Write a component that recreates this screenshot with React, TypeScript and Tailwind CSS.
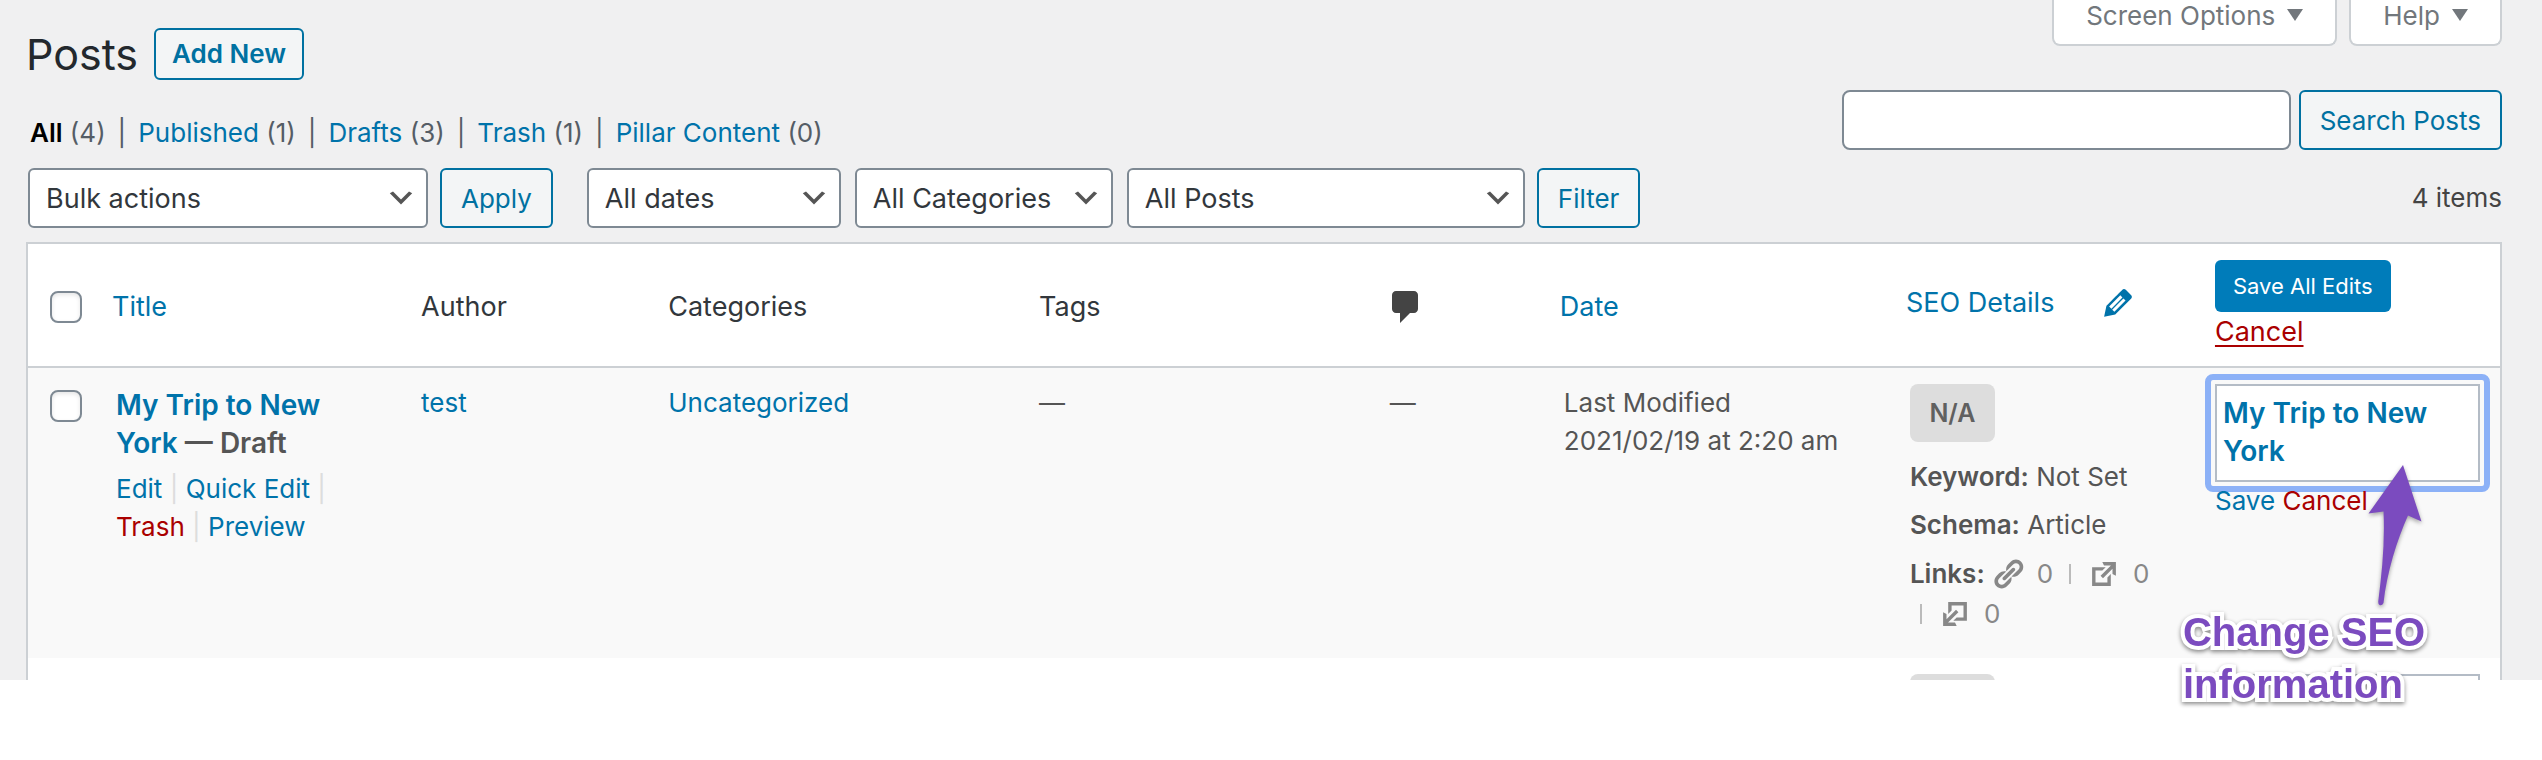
import { useState } from 'react';
import type { ReactNode } from 'react';

const views = [
    { label: 'All', count: 4, current: true },
    { label: 'Published', count: 1 },
    { label: 'Drafts', count: 3 },
    { label: 'Trash', count: 1 },
    { label: 'Pillar Content', count: 0 },
];

const linkClass = 'text-[#0073aa]';
const buttonClass = 'h-[60px] rounded-md border-2 border-[#0071a1] bg-[#f3f5f6] px-[19px] pt-0.5 text-[26px] text-[#0071a1]';
const checkboxClass = 'block size-8 appearance-none rounded-lg border-2 border-[#7e8993] bg-white shadow-[inset_0_2px_4px_rgba(0,0,0,0.1)]';
const headClass = 'pt-[18px] pb-[14px]';

function DashIcon({ path, className }: { path: string; className?: string }) {
    return (
        <svg viewBox="0 0 20 20" fill="currentColor" aria-hidden="true" className={className}>
            <path d={path} />
        </svg>
    );
}

const icons = {
    comment: 'M5 2h9c1.1 0 2 .9 2 2v7c0 1.1-.9 2-2 2h-2l-5 5v-5H5c-1.1 0-2-.9-2-2V4c0-1.1.9-2 2-2z',
    edit: 'M13.89 3.39l2.71 2.72c.46.46.42 1.24.03 1.64l-8.01 8.02-5.56 1.16 1.16-5.58s7.6-7.63 7.99-8.03c.39-.39 1.22-.39 1.68.07zm-2.73 2.79l-5.59 5.61 1.11 1.11 5.54-5.65zm-2.97 8.23l5.58-5.6-1.07-1.08-5.59 5.6z',
    link: 'M17.74 2.76c1.68 1.69 1.68 4.41 0 6.1l-1.53 1.52c-1.12 1.12-2.7 1.47-4.14 1.09l2.62-2.61.76-.77.76-.76c.84-.84.84-2.2 0-3.04-.84-.85-2.2-.85-3.04 0l-.77.76-3.38 3.38c-.37-1.44-.02-3.02 1.1-4.14l1.52-1.53c1.69-1.68 4.42-1.68 6.1 0zM8.59 13.43l5.34-5.34c.42-.42.42-1.1 0-1.52-.44-.43-1.13-.39-1.53 0l-5.33 5.34c-.42.42-.42 1.1 0 1.52.44.43 1.13.39 1.52 0zm-.76 2.29l4.14-4.15c.38 1.44.03 3.02-1.09 4.14l-1.52 1.53c-1.69 1.68-4.41 1.68-6.1 0-1.68-1.68-1.68-4.42 0-6.1l1.53-1.52c1.12-1.12 2.7-1.47 4.14-1.1l-4.14 4.15c-.85.84-.85 2.2 0 3.05.84.84 2.2.84 3.04 0z',
    external: 'M9 3h8v8l-2-1V6.92l-5.6 5.59-1.41-1.41L14.08 5H10zm3 12v-3l2-2v7H3V6h8L9 8H5v7h7z',
    chevron: 'M5 6l5 5 5-5 2 1-7 7-7-7 2-1z',
};

function Select({ label, options, className }: { label: string; options: string[]; className: string }) {
    return (
        <div className={`relative ${className}`}>
            <select aria-label={label} className="h-[60px] w-full appearance-none rounded-md border-2 border-[#7e8993] bg-white pt-0.5 pl-4 text-[27px] text-[#32373c]">
                {options.map((option) => (
                    <option key={option}>{option}</option>
                ))}
            </select>
            <DashIcon path={icons.chevron} className="pointer-events-none absolute top-[14px] right-[11px] size-8 text-[#555]" />
        </div>
    );
}

function MetaTab({ children }: { children: ReactNode }) {
    return (
        <button type="button" className="flex h-[46px] items-start gap-3 rounded-b-lg border-2 border-t-0 border-[#ccd0d4] bg-white px-8 text-[26px] leading-8 text-[#72777c]">
            {children}
            <svg viewBox="0 0 16 12" fill="currentColor" aria-hidden="true" className="mt-[9px] h-3 w-4">
                <path d="M0 0h16L8 12z" />
            </svg>
        </button>
    );
}

function ScoreBadge({ score }: { score?: string }) {
    return (
        <span className="flex h-[58px] w-[85px] items-center justify-center rounded-lg bg-[#ddd] text-[25px] font-semibold text-[#606060]">
            {score}
        </span>
    );
}

function LinkCount({ icon, flip }: { icon: string; flip?: boolean }) {
    return (
        <>
            <DashIcon path={icon} className={`size-[34px] ${flip ? 'rotate-180' : ''}`} />
            <span className="mr-4 ml-3">0</span>
        </>
    );
}

function Callout() {
    return (
        <div className="pointer-events-none absolute top-[90px] -left-[32px] w-[300px]">
            <svg viewBox="0 0 300 142" aria-hidden="true" className="block h-[142px] w-[300px] overflow-visible drop-shadow-[0_2px_2px_rgba(0,0,0,0.35)]">
                <path
                    d="M220 1 L238.500 57.500 L225 51.500 C214 76 204 108 200.500 139 Q199 142 196.500 141 Q195 140 195.300 137 C199 108 202 78 200.500 47.500 L185.500 49.500 Z"
                    fill="#7b4bbf"
                />
            </svg>
            <p className="[font-family:'Liberation_Sans',sans-serif] text-[40px] leading-[52px] font-bold text-[#7b4bbf] [-webkit-text-stroke:8px_white] [paint-order:stroke_fill] drop-shadow-[0_2px_2px_rgba(0,0,0,0.45)]">
                Change SEO
                <br />
                information
            </p>
        </div>
    );
}

export default function App() {
    const [seoTitle, setSeoTitle] = useState('My Trip to New York');

    return (
        <div className="min-h-screen bg-white [font-family:Inter,sans-serif] text-[26px] leading-[38px] text-[#444]">
            <div className="bg-[#f0f0f1] pr-10 pl-[26px]">
                <header className="flex h-[90px] items-start justify-between">
                    <div className="flex items-center gap-4 pt-7">
                        <h1 className="text-[43px] leading-[52px] text-[#23282d]">Posts</h1>
                        <a href="#add" className="flex h-[52px] items-center rounded-md border-2 border-[#0071a1] bg-[#f3f5f6] px-4 font-semibold text-[#0071a1]">
                            Add New
                        </a>
                    </div>
                    <div className="flex gap-3">
                        <MetaTab>Screen Options</MetaTab>
                        <MetaTab>Help</MetaTab>
                    </div>
                </header>

                <div className="flex items-end justify-between">
                    <ul className="flex pl-1 leading-[34px]">
                        {views.map((view, index) => (
                            <li key={view.label} className="text-[#555d66]">
                                <a href="#view" className={view.current ? 'font-semibold text-black' : linkClass}>
                                    {view.label}
                                </a>{' '}
                                ({view.count}){index < views.length - 1 && <span className="mx-3">|</span>}
                            </li>
                        ))}
                    </ul>
                    <form className="flex gap-2">
                        <input type="search" aria-label="Search Posts" className="h-[60px] w-[449px] rounded-lg border-2 border-[#7e8993] bg-white px-4" />
                        <button type="button" className={buttonClass}>Search Posts</button>
                    </form>
                </div>

                <div className="mt-[18px] mb-[14px] flex items-center pl-[2px]">
                    <Select label="Select bulk action" options={['Bulk actions', 'Edit', 'Move to Trash']} className="mr-3 w-[400px]" />
                    <button type="button" className={`${buttonClass} mr-[34px]`}>Apply</button>
                    <Select label="Filter by date" options={['All dates']} className="mr-[14px] w-[254px]" />
                    <Select label="Filter by category" options={['All Categories', 'Uncategorized']} className="mr-[14px] w-[258px]" />
                    <Select label="Filter by SEO" options={['All Posts']} className="mr-3 w-[398px]" />
                    <button type="button" className={buttonClass}>Filter</button>
                    <span className="ml-auto">4 items</span>
                </div>

                <table className="w-full table-fixed border-separate border-spacing-0 border-2 border-b-0 border-[#ccd0d4] bg-white text-left">
                    <colgroup>
                        <col className="w-[68px]" />
                        <col />
                        <col className="w-[10%]" />
                        <col className="w-[15%]" />
                        <col className="w-[15%]" />
                        <col className="w-[154px]" />
                        <col className="w-[14%]" />
                        <col />
                        <col />
                    </colgroup>
                    <thead className="text-[27px] text-[#32373c] [&_th]:border-b-2 [&_th]:border-[#ccd0d4] [&_th]:font-normal">
                        <tr>
                            <th className={`${headClass} pl-[22px]`}>
                                <input type="checkbox" aria-label="Select All" className={checkboxClass} />
                            </th>
                            <th className={`${headClass} px-4`}><a href="#title" className={linkClass}>Title</a></th>
                            <th className={`${headClass} px-5`}>Author</th>
                            <th className={`${headClass} px-5`}>Categories</th>
                            <th className={`${headClass} px-5`}>Tags</th>
                            <th aria-label="Comments" className={headClass}>
                                <DashIcon path={icons.comment} className="-ml-1 size-10 text-[#444]" />
                            </th>
                            <th className={`${headClass} px-4`}><a href="#date" className={linkClass}>Date</a></th>
                            <th className="px-4 pt-[14px] pb-[18px]">
                                <span className="flex items-center gap-11">
                                    <a href="#seo" className={linkClass}>SEO Details</a>
                                    <button type="button" aria-label="Edit SEO details" className={linkClass}>
                                        <DashIcon path={icons.edit} className="size-10" />
                                    </button>
                                </span>
                            </th>
                            <th className="px-5 pt-4 pb-[14px]">
                                <button type="button" className="block h-[52px] rounded-md bg-[#007cba] px-[18px] text-[22px] text-white">
                                    Save All Edits
                                </button>
                                <a href="#cancel" className="block leading-10 text-[#a00] underline underline-offset-4">Cancel</a>
                            </th>
                        </tr>
                    </thead>
                    <tbody className="text-[#555] [&_td]:py-4 [&_td]:align-top">
                        <tr className="bg-[#f9f9f9]">
                            <td className="pl-[22px]">
                                <input type="checkbox" aria-label="Select My Trip to New York" className={`${checkboxClass} mt-1.5`} />
                            </td>
                            <td className="px-5">
                                <strong className="block pt-0.5 text-[28px] font-semibold">
                                    <a href="#post" className={linkClass}>My Trip to New York</a> — Draft
                                </strong>
                                <div className="mt-2 text-[#ddd]">
                                    <a href="#edit" className={linkClass}>Edit</a> | <a href="#quick" className={linkClass}>Quick Edit</a> |{' '}
                                    <a href="#trash" className="text-[#a00]">Trash</a> | <a href="#preview" className={linkClass}>Preview</a>
                                </div>
                            </td>
                            <td className="px-5"><a href="#author" className={linkClass}>test</a></td>
                            <td className="px-5"><a href="#category" className={linkClass}>Uncategorized</a></td>
                            <td className="px-5">—</td>
                            <td>—</td>
                            <td className="px-5">
                                Last Modified
                                <br />
                                2021/02/19 at 2:20 am
                            </td>
                            <td className="px-5">
                                <ScoreBadge score="N/A" />
                                <p className="mt-4 mb-2.5"><strong className="font-semibold">Keyword:</strong> Not Set</p>
                                <p className="mb-2.5"><strong className="font-semibold">Schema:</strong> Article</p>
                                <div className="mb-2 flex flex-wrap items-center leading-10 text-[#888]">
                                    <strong className="mr-1.5 font-semibold text-[#555]">Links:</strong>
                                    <LinkCount icon={icons.link} />
                                    <span className="mr-4 h-5 w-0.5 bg-[#bbb]" />
                                    <LinkCount icon={icons.external} />
                                    <span className="mr-4 ml-2.5 h-5 w-0.5 bg-[#bbb]" />
                                    <LinkCount icon={icons.external} flip />
                                </div>
                            </td>
                            <td className="px-5">
                                <div className="relative">
                                    <div className="-m-2.5 rounded-lg border-6 border-[#8cb1f7] p-1">
                                        <textarea
                                            aria-label="SEO title"
                                            rows={2}
                                            value={seoTitle}
                                            onChange={(e) => setSeoTitle(e.target.value)}
                                            className="block h-[98px] w-full resize-none overflow-hidden border-2 border-[#b4bcc6] bg-white px-1.5 pt-2 text-[28px] font-semibold text-[#0073aa] outline-none"
                                        />
                                    </div>
                                    <div className="relative">
                                        <a href="#save" className={linkClass}>Save</a> <a href="#cancel-edit" className="text-[#a00]">Cancel</a>
                                    </div>
                                    <Callout />
                                </div>
                            </td>
                        </tr>
                        {/* next post, only its top edge is visible */}
                        <tr className="[&>td]:pb-0">
                            <td colSpan={7} />
                            <td className="px-5">
                                <div className="h-1.5 overflow-hidden"><ScoreBadge /></div>
                            </td>
                            <td className="px-5">
                                <div className="h-1.5 border-2 border-b-0 border-[#b4bcc6]" />
                            </td>
                        </tr>
                    </tbody>
                </table>
            </div>
        </div>
    );
}
